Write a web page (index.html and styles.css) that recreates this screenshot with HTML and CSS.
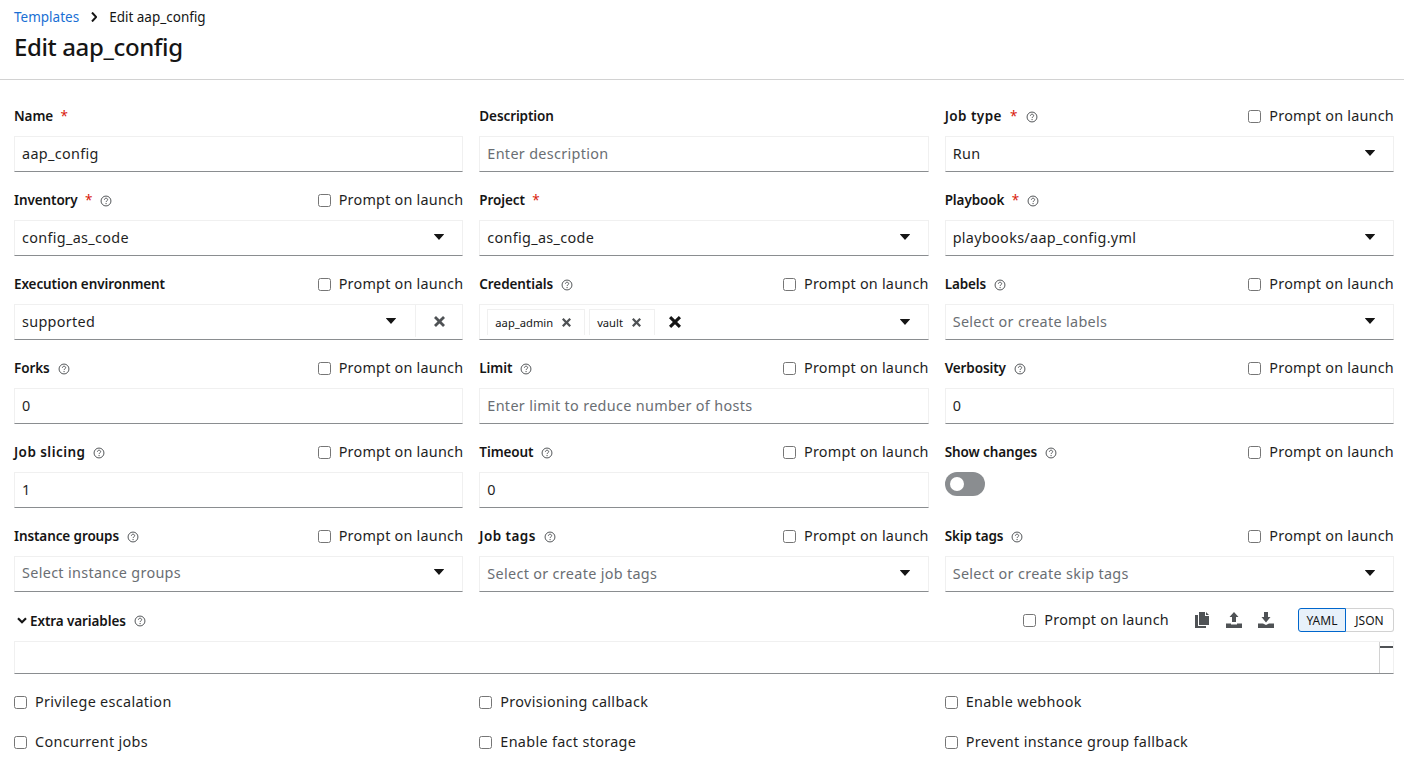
FILE: index.html
```html
<!DOCTYPE html>
<html lang="en">
<head>
<meta charset="utf-8">
<title>Edit aap_config</title>
<link rel="stylesheet" href="styles.css">
</head>
<body>
<svg class="defs" width="0" height="0" aria-hidden="true">
  <symbol id="help" viewBox="0 0 16 16"><circle cx="8" cy="8" r="6.6" fill="none" stroke="currentColor" stroke-width="1.3"/><path d="M5.9 6.4c0-1.3 1-2.1 2.2-2.1s2.1.8 2.1 1.9c0 1.7-2.1 1.6-2.1 3.2" fill="none" stroke="currentColor" stroke-width="1.3"/><circle cx="8.1" cy="11.4" r=".9" fill="currentColor"/></symbol>
  <symbol id="caret" viewBox="0 0 10 6"><path d="M.2 0h9.6c.2 0 .3.3.1.4L5.2 5.800a.3.3 0 0 1-.4 0L.1.4C-.1.3 0 0 .2 0z" fill="currentColor"/></symbol>
  <symbol id="x" viewBox="0 0 10 10"><path d="M1.800 0 5 3.200 8.200 0 10 1.800 6.800 5 10 8.200 8.200 10 5 6.800 1.800 10 0 8.200 3.200 5 0 1.800z" fill="currentColor"/></symbol>
</svg>
<header class="page-header">
  <nav class="crumbs"><a class="crumb-link">Templates</a>
    <svg class="crumb-sep" viewBox="0 0 6 10"><path d="M1 .5 5.200 5 1 9.500" fill="none" stroke="currentColor" stroke-width="2"/></svg>
    <span>Edit aap_config</span></nav>
  <h1>Edit aap_config</h1>
</header>
<form class="form">
  <div class="grid">
    <div class="field">
      <div class="label-row"><label class="lbl">Name <span class="req">*</span></label></div>
      <div class="control"><span>aap_config</span></div>
    </div>
    <div class="field">
      <div class="label-row"><label class="lbl">Description</label></div>
      <div class="control"><span class="ph">Enter description</span></div>
    </div>
    <div class="field">
      <div class="label-row"><label class="lbl lbl-job">Job type <span class="req">*</span><svg class="help"><use href="#help"/></svg></label><label class="prompt"><i class="cb"></i>Prompt on launch</label></div>
      <div class="control"><span>Run</span><svg class="caret"><use href="#caret"/></svg></div>
    </div>

    <div class="field">
      <div class="label-row"><label class="lbl">Inventory <span class="req">*</span><svg class="help"><use href="#help"/></svg></label><label class="prompt"><i class="cb"></i>Prompt on launch</label></div>
      <div class="control"><span>config_as_code</span><svg class="caret"><use href="#caret"/></svg></div>
    </div>
    <div class="field">
      <div class="label-row"><label class="lbl">Project <span class="req">*</span></label></div>
      <div class="control"><span>config_as_code</span><svg class="caret"><use href="#caret"/></svg></div>
    </div>
    <div class="field">
      <div class="label-row"><label class="lbl">Playbook <span class="req">*</span><svg class="help"><use href="#help"/></svg></label></div>
      <div class="control"><span>playbooks/aap_config.yml</span><svg class="caret"><use href="#caret"/></svg></div>
    </div>

    <div class="field">
      <div class="label-row"><label class="lbl">Execution environment</label><label class="prompt"><i class="cb"></i>Prompt on launch</label></div>
      <div class="control control-split"><span>supported</span><svg class="caret caret-split"><use href="#caret"/></svg><button type="button" class="clear"><svg class="x-md"><use href="#x"/></svg></button></div>
    </div>
    <div class="field">
      <div class="label-row"><label class="lbl">Credentials<svg class="help"><use href="#help"/></svg></label><label class="prompt"><i class="cb"></i>Prompt on launch</label></div>
      <div class="control control-chips">
        <span class="chip">aap_admin<svg class="x-sm"><use href="#x"/></svg></span>
        <span class="chip">vault<svg class="x-sm"><use href="#x"/></svg></span>
        <svg class="x-lg"><use href="#x"/></svg>
        <svg class="caret"><use href="#caret"/></svg>
      </div>
    </div>
    <div class="field">
      <div class="label-row"><label class="lbl">Labels<svg class="help"><use href="#help"/></svg></label><label class="prompt"><i class="cb"></i>Prompt on launch</label></div>
      <div class="control"><span class="ph">Select or create labels</span><svg class="caret"><use href="#caret"/></svg></div>
    </div>

    <div class="field">
      <div class="label-row"><label class="lbl">Forks<svg class="help"><use href="#help"/></svg></label><label class="prompt"><i class="cb"></i>Prompt on launch</label></div>
      <div class="control"><span>0</span></div>
    </div>
    <div class="field">
      <div class="label-row"><label class="lbl">Limit<svg class="help"><use href="#help"/></svg></label><label class="prompt"><i class="cb"></i>Prompt on launch</label></div>
      <div class="control"><span class="ph">Enter limit to reduce number of hosts</span></div>
    </div>
    <div class="field">
      <div class="label-row"><label class="lbl">Verbosity<svg class="help"><use href="#help"/></svg></label><label class="prompt"><i class="cb"></i>Prompt on launch</label></div>
      <div class="control"><span>0</span></div>
    </div>

    <div class="field">
      <div class="label-row"><label class="lbl lbl-job">Job slicing<svg class="help"><use href="#help"/></svg></label><label class="prompt"><i class="cb"></i>Prompt on launch</label></div>
      <div class="control"><span>1</span></div>
    </div>
    <div class="field">
      <div class="label-row"><label class="lbl">Timeout<svg class="help"><use href="#help"/></svg></label><label class="prompt"><i class="cb"></i>Prompt on launch</label></div>
      <div class="control"><span>0</span></div>
    </div>
    <div class="field">
      <div class="label-row"><label class="lbl">Show changes<svg class="help"><use href="#help"/></svg></label><label class="prompt"><i class="cb"></i>Prompt on launch</label></div>
      <div class="switch"><i class="knob"></i></div>
    </div>

    <div class="field">
      <div class="label-row"><label class="lbl">Instance groups<svg class="help"><use href="#help"/></svg></label><label class="prompt"><i class="cb"></i>Prompt on launch</label></div>
      <div class="control control-high"><span class="ph">Select instance groups</span><svg class="caret"><use href="#caret"/></svg></div>
    </div>
    <div class="field">
      <div class="label-row"><label class="lbl lbl-job">Job tags<svg class="help"><use href="#help"/></svg></label><label class="prompt"><i class="cb"></i>Prompt on launch</label></div>
      <div class="control"><span class="ph">Select or create job tags</span><svg class="caret"><use href="#caret"/></svg></div>
    </div>
    <div class="field">
      <div class="label-row"><label class="lbl">Skip tags<svg class="help"><use href="#help"/></svg></label><label class="prompt"><i class="cb"></i>Prompt on launch</label></div>
      <div class="control"><span class="ph">Select or create skip tags</span><svg class="caret"><use href="#caret"/></svg></div>
    </div>

    <div class="field field-wide">
      <div class="label-row label-row-extra">
        <label class="lbl lbl-extra"><svg class="chev" viewBox="0 0 10 7"><path d="M1 1.200 5 5.200 9 1.200" fill="none" stroke="currentColor" stroke-width="2.200"/></svg>Extra variables<svg class="help"><use href="#help"/></svg></label>
        <div class="tools">
          <label class="prompt"><i class="cb"></i>Prompt on launch</label>
          <div class="tool-icons">
            <svg class="tool" viewBox="0 0 16 16"><path d="M5 0h6v4h4v9H5z M12 0l3 3h-3z M1 3h3v11h8v2H1z" fill="currentColor"/></svg>
            <svg class="tool tool-wide" viewBox="0 0 16 16"><path d="M8 0l4.500 5H10v5H6V5H3.500z M0 11.500h5V12.500h6v-1h5V16H0z" fill="currentColor"/></svg>
            <svg class="tool tool-wide" viewBox="0 0 16 16"><path d="M6 0h4v5h2.500L8 10.500 3.500 5H6z M0 11.500h5L8 13l3-1.500h5V16H0z" fill="currentColor"/></svg>
          </div>
          <div class="toggle"><span class="tg tg-on">YAML</span><span class="tg">JSON</span></div>
        </div>
      </div>
      <div class="editor"><div class="editor-side"><i class="editor-mark"></i></div></div>
    </div>

    <label class="opt"><i class="cb"></i>Privilege escalation</label>
    <label class="opt"><i class="cb"></i>Provisioning callback</label>
    <label class="opt"><i class="cb"></i>Enable webhook</label>
    <label class="opt"><i class="cb"></i>Concurrent jobs</label>
    <label class="opt"><i class="cb"></i>Enable fact storage</label>
    <label class="opt"><i class="cb"></i>Prevent instance group fallback</label>
  </div>
</form>
</body>
</html>
```
FILE: styles.css
```css
* { box-sizing: border-box; }
html, body { margin: 0; padding: 0; background: #fff; }
body { width: 1404px; height: 771px; overflow: hidden; font-family: "Noto Sans", "Open Sans", sans-serif; color: #151515; font-size: 15px; }
.defs { position: absolute; }
.page-header { height: 80px; border-bottom: 1px solid #d2d2d2; padding: 8px 14px 0; }
.crumbs { display: flex; align-items: center; height: 18px; font-size: 13.5px; line-height: 18px; }
.crumb-link { color: #1a6fd4; }
.crumb-sep { width: 6px; height: 10px; margin: 0 12px 0 12px; color: #151515; }
h1 { margin: 6px 0 0; font-size: 24px; line-height: 30px; font-weight: 500; color: #151515; letter-spacing: -.38px; }
.form { padding: 24px 10px 0 14px; }
.grid { display: grid; grid-template-columns: repeat(3, 1fr); column-gap: 16px; row-gap: 16px; }
.field { min-width: 0; }
.field-wide { grid-column: 1 / -1; }
.label-row { display: flex; justify-content: space-between; align-items: center; height: 24px; margin-bottom: 8px; }
.label-row-extra { margin-bottom: 9px; padding-top: 1px; }
.lbl { display: flex; align-items: center; font-size: 13.5px; font-weight: 600; white-space: pre; letter-spacing: -.1px; }
.lbl-job { letter-spacing: .45px; }
.req { color: #d9190b; font-weight: 400; margin-left: 4px; }
.help { width: 12px; height: 12px; margin-left: 8px; margin-top: 1px; color: #4f5255; }
.prompt { display: flex; align-items: center; padding-bottom: 2px; font-size: 14.4px; letter-spacing: .225px; color: #1f1f1f; }
.cb { display: block; width: 13px; height: 13px; margin-top: 2px; border: 1px solid #767676; border-radius: 2.5px; background: #fff; margin-right: 8px; flex: none; }
.control { position: relative; height: 36px; display: flex; align-items: center; padding: 0 7px 2px; border: 1px solid #f0f0f0; border-bottom: 1px solid #8a8d90; font-size: 14.4px; color: #1f1f1f; letter-spacing: .32px; }
.control-high { padding-bottom: 4px; }
.ph { color: #6a6e73; }
.caret { width: 10px; height: 6px; margin-left: auto; margin-right: 11px; color: #151515; flex: none; }
.control-split { padding-right: 0; }
.caret-split { margin-right: 19px; }
.clear { width: 47px; height: 32px; flex: none; border: 0; border-left: 1px solid #f0f0f0; background: #fff; display: flex; align-items: center; justify-content: center; padding: 0; color: #4f5255; }
.x-md { width: 11px; height: 11px; }
.control-chips { padding-left: 7px; padding-bottom: 4px; padding-top: 4px; }
.chip { display: flex; align-items: center; height: 26px; margin-top: -1px; padding: 0 13px 0 7px; margin-right: 4px; border: 1px solid #f0f0f0; border-bottom: 0; font-size: 11.2px; color: #151515; letter-spacing: 0; }
.x-sm { width: 9px; height: 9px; margin-left: 9px; color: #4f5255; }
.x-lg { width: 12px; height: 12px; margin-left: 10px; color: #151515; }
.switch { position: relative; width: 40px; height: 24px; border-radius: 12px; background: #8a8d90; margin-top: 1px; }
.knob { position: absolute; left: 5px; top: 5px; width: 14px; height: 14px; border-radius: 50%; background: #fff; }
.lbl-extra { margin-left: 3px; }
.chev { width: 10px; height: 7px; margin-right: 3px; color: #151515; }
.tools { display: flex; align-items: center; margin-top: -1px; }
.tool-icons { display: flex; align-items: center; margin-left: 25px; color: #4f5255; }
.tool { width: 16px; height: 16px; }
.tool-wide { margin-left: 16px; }
.toggle { display: flex; margin-left: 24px; height: 24px; }
.tg { display: flex; align-items: center; justify-content: center; width: 48px; border: 1px solid #d2d2d2; border-left: 0; border-radius: 0 3px 3px 0; font-size: 12px; color: #151515; }
.tg-on { background: #e7f1fa; border: 1px solid #0066cc; border-radius: 3px 0 0 3px; }
.editor { height: 33px; margin-bottom: -1px; border: 1px solid #f0f0f0; border-bottom: 1px solid #8a8d90; display: flex; justify-content: flex-end; }
.editor-side { width: 14px; border-left: 1px solid #d2d2d2; }
.editor-mark { display: block; height: 2px; margin-top: 4px; background: #4f5255; }
.opt { display: flex; align-items: center; height: 24px; font-size: 14.4px; letter-spacing: .32px; color: #1f1f1f; }
```
